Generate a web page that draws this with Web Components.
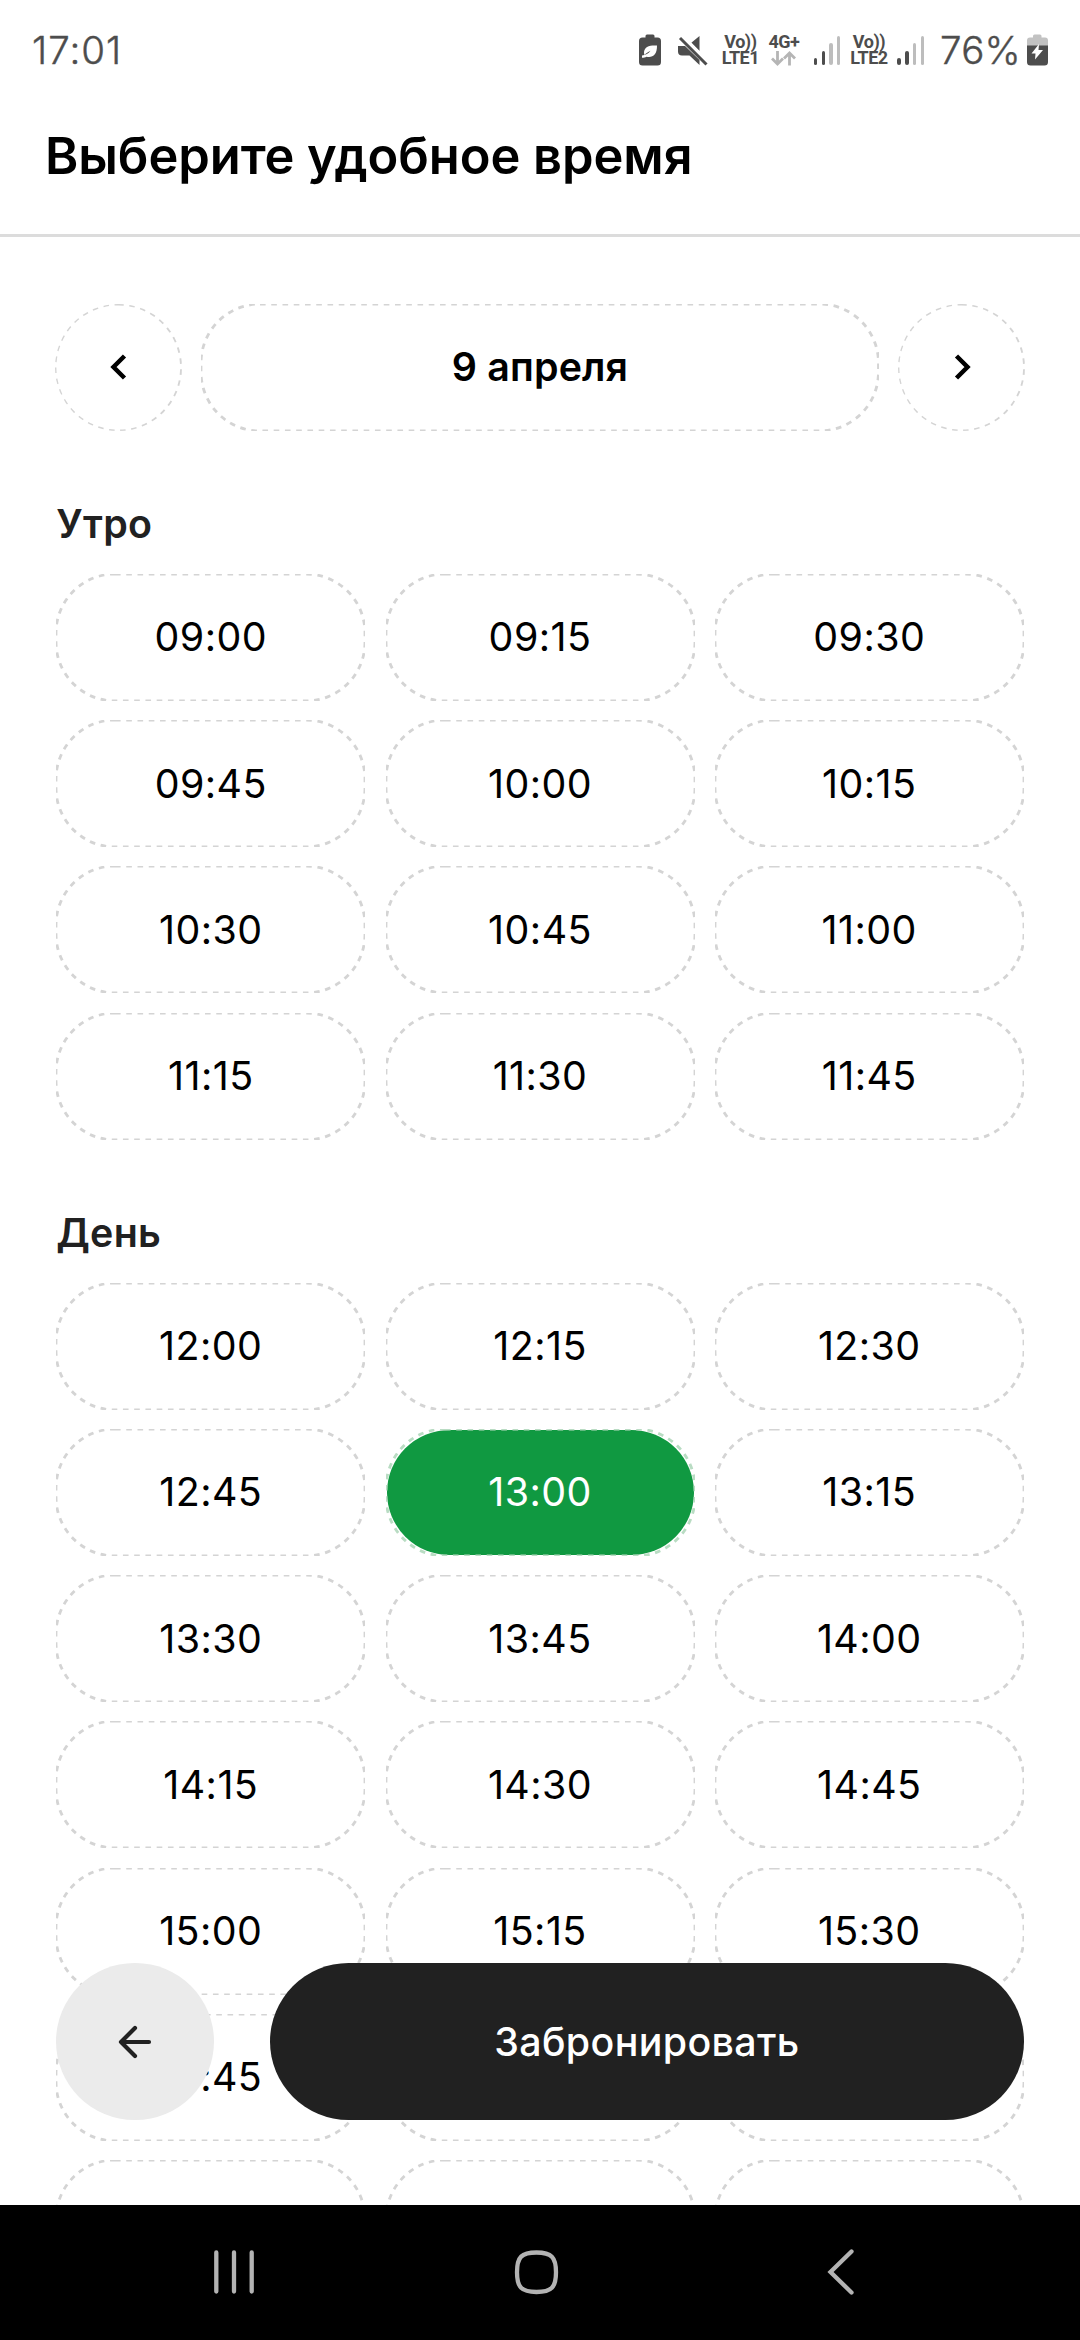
<!DOCTYPE html>
<html lang="ru">
<head>
<meta charset="utf-8">
<title>Выберите удобное время</title>
<style>
  html, body {
    margin: 0;
    height: 100%;
    overflow: hidden;
    background: #fff;
    font-family: Inter, sans-serif;
    color: #000;
  }
</style>
</head>
<body>
<booking-screen></booking-screen>

<script>
const timeGroups = [
  {
    title: 'Утро',
    times: ['09:00', '09:15', '09:30', '09:45', '10:00', '10:15', '10:30', '10:45', '11:00', '11:15', '11:30', '11:45']
  },
  {
    title: 'День',
    times: ['12:00', '12:15', '12:30', '12:45', '13:00', '13:15', '13:30', '13:45', '14:00', '14:15', '14:30', '14:45', '15:00', '15:15', '15:30', '15:45', '', '', '', '', '']
  }
];
const selectedTime = '13:00';

/**
 * @class StatusBar
 * @classdesc Phone status bar: clock on the left, indicators and battery on the right.
 * @augments HTMLElement
 */
class StatusBar extends HTMLElement {
  shadowRoot = this.attachShadow({ mode: 'open' });

  connectedCallback () {
    this.shadowRoot.innerHTML = `
      <style>
        :host {
          display: flex;
          align-items: center;
          justify-content: space-between;
          height: 100px;
          box-sizing: border-box;
          padding: 0 32px;
          color: #4d4d4d;
        }
        .clock, .percent {
          font-size: 38.500px;
          line-height: 46px;
          font-weight: 300;
          -webkit-text-stroke: 0.400px #4d4d4d;
          white-space: nowrap;
        }
        .clock { letter-spacing: 1px; }
        .percent { width: 84px; margin: 0 6px 0 13px; text-align: right; letter-spacing: 0.300px; }
        .indicators { display: flex; align-items: center; }
        .indicators > * { flex: none; }
        svg { display: block; }
        .volte, .network {
          display: flex;
          flex-direction: column;
          align-items: center;
          font: 700 18px/16.500px Roboto, sans-serif;
          letter-spacing: -0.500px;
          white-space: nowrap;
        }
        .volte { width: 38px; }
        .network { width: 33px; }
      </style>
      <span class="clock">${this.getAttribute('time')}</span>
      <div class="indicators">
        <svg width="22" height="32" viewBox="0 0 22 32">
          <path fill="#4d4d4d" d="M6.500 3.500V2Q6.500 .500 8 .500h6Q15.500 .500 15.500 2v1.500h3Q22 3.500 22 7v21q0 3.500-3.500 3.500h-15Q0 31.500 0 28V7Q0 3.500 3.500 3.500z"/>
          <path fill="#fff" d="M18 11.500c-7-.5-13 1-13 7.300 0 1 .2 1.700.5 2.300C7 19.500 9 18 11.500 16.800 9.500 19.500 6.500 21.500 3 21.500v2.300c1.800 0 3.300-.5 4.500-1.100 6 1.300 10.700-1.700 10.500-11.200z"/>
        </svg>
        <svg width="30" height="31" viewBox="0 0 30 31" style="margin-left:17px">
          <path fill="#4d4d4d" d="M21.500 1v15L13 8zM0 11h7l14.500 14v5L11.500 20.500H4q-4 0-4-4z"/>
          <path stroke="#fff" stroke-width="3" d="M5 1l25 26"/>
          <path stroke="#4d4d4d" stroke-width="3" d="M2 3l26.500 26.500"/>
        </svg>
        <div class="volte" style="margin-left:13px"><span>Vo))</span><span>LTE1</span></div>
        <div class="network" style="margin-left:8px">
          <span>4G+</span>
          <svg width="25" height="16.500" viewBox="0 0 25 16.500" fill="none" stroke="#b5b5b5" stroke-width="2.800">
            <path d="M6.500 1v13M1 8.500l5.500 5.500L12 8.500M18.500 15.500V3M13 8.500L18.500 3 24 8.500"/>
          </svg>
        </div>
        <signal-bars style="margin-left:13.500px"></signal-bars>
        <div class="volte" style="margin-left:9.500px"><span>Vo))</span><span>LTE2</span></div>
        <signal-bars style="margin-left:9.500px"></signal-bars>
        <span class="percent">${this.getAttribute('battery')}</span>
        <svg width="21" height="32" viewBox="0 0 21 32">
          <path fill="#c2c2c2" d="M6 3.500V2Q6 .500 7.500 .500h5.500Q14.500 .500 14.500 2v1.500H18q3 0 3 3V13H0V6.500q0-3 3-3z"/>
          <path fill="#4d4d4d" d="M0 11.500h21V28q0 3.500-3.500 3.500h-14Q0 31.500 0 28z"/>
          <path fill="#fff" d="M12 10L4.500 19.500h4L8 25.500l8-9.500h-4.500z"/>
        </svg>
      </div>
    `;
  }
}

/**
 * @class SignalBars
 * @classdesc Four signal bars, two of them lit.
 * @augments HTMLElement
 */
class SignalBars extends HTMLElement {
  shadowRoot = this.attachShadow({ mode: 'open' });

  connectedCallback () {
    this.shadowRoot.innerHTML = `
      <style>
        :host { display: flex; align-items: flex-end; gap: 4.200px; height: 29px; }
        i { width: 3.500px; border-radius: 2px; background: #bdbdbd; }
        .on { background: #4d4d4d; }
      </style>
      <i class="on" style="height:6.500px"></i>
      <i class="on" style="height:14px"></i>
      <i style="height:22px"></i>
      <i style="height:29px"></i>
    `;
  }
}

/**
 * @class PageHeader
 * @classdesc Screen title with a divider under it.
 * @augments HTMLElement
 */
class PageHeader extends HTMLElement {
  shadowRoot = this.attachShadow({ mode: 'open' });

  connectedCallback () {
    this.shadowRoot.innerHTML = `
      <style>
        :host {
          display: flex;
          align-items: center;
          height: 137px;
          box-sizing: border-box;
          padding: 0 45px 23px;
          border-bottom: 3px solid #dcdcdc;
        }
        h1 {
          margin: 0;
          font-size: 50.625px;
          line-height: 60px;
          font-weight: 600;
          letter-spacing: -0.070px;
        }
      </style>
      <h1><slot></slot></h1>
    `;
  }
}

/**
 * @class DashedBox
 * @classdesc Rounded box with a dashed outline; the outline is clipped on its straight sides.
 * @augments HTMLElement
 */
class DashedBox extends HTMLElement {
  shadowRoot = this.attachShadow({ mode: 'open' });

  connectedCallback () {
    const radius = this.getAttribute('radius') || '59';
    this.shadowRoot.innerHTML = `
      <style>
        :host {
          display: grid;
          grid-template: 100% / 100%;
          height: 127px;
        }
        svg, div { grid-area: 1 / 1; }
        svg {
          display: block;
          width: 100%;
          height: 100%;
          overflow: hidden;
        }
        rect {
          fill: none;
          stroke: var(--dash-color, #d4d4d4);
          stroke-width: 2.810px;
          stroke-dasharray: 5.625px;
        }
        div {
          display: flex;
          align-items: center;
          justify-content: center;
          padding-bottom: 1px;
        }
      </style>
      <svg><rect width="100%" height="100%" rx="${radius}"/></svg>
      <div><slot></slot></div>
    `;
  }
}

/**
 * @class DatePicker
 * @classdesc Current date between the previous and next buttons.
 * @augments HTMLElement
 */
class DatePicker extends HTMLElement {
  shadowRoot = this.attachShadow({ mode: 'open' });

  connectedCallback () {
    this.shadowRoot.innerHTML = `
      <style>
        :host { display: flex; gap: 19.500px; }
        .step {
          width: 126.500px;
          border-radius: 50%;
          overflow: hidden;
        }
        .date {
          flex: 1;
          font-size: 39.375px;
          font-weight: 600;
          letter-spacing: 0.150px;
        }
        svg { display: block; fill: none; stroke: #000; stroke-width: 4.500; }
      </style>
      <dashed-box class="step" radius="63.5" role="button" aria-label="Назад">
        <svg width="24" height="30" viewBox="0 0 24 30"><path d="M17.500 4L6.500 15l11 11"/></svg>
      </dashed-box>
      <dashed-box class="date"><slot></slot></dashed-box>
      <dashed-box class="step" radius="63.5" role="button" aria-label="Вперёд">
        <svg width="24" height="30" viewBox="0 0 24 30"><path d="M6.500 4l11 11-11 11"/></svg>
      </dashed-box>
    `;
  }
}

/**
 * @class TimeSlot
 * @classdesc A single bookable time; the "selected" attribute fills it green.
 * @augments HTMLElement
 */
class TimeSlot extends HTMLElement {
  shadowRoot = this.attachShadow({ mode: 'open' });

  connectedCallback () {
    this.shadowRoot.innerHTML = `
      <style>
        :host {
          display: block;
          box-sizing: border-box;
          height: 127px;
          padding: 1px;
          border-radius: 64px;
          font-size: 39.375px;
          letter-spacing: 0.450px;
        }
        :host([selected]) {
          --dash-color: #b9dcc3;
          background: #109941 content-box;
          color: #fff;
        }
        dashed-box { margin: -1px; }
      </style>
      <dashed-box><slot></slot></dashed-box>
    `;
  }
}

/**
 * @class TimeGroup
 * @classdesc Titled three-column grid of time slots.
 * @augments HTMLElement
 */
class TimeGroup extends HTMLElement {
  shadowRoot = this.attachShadow({ mode: 'open' });

  connectedCallback () {
    this.shadowRoot.innerHTML = `
      <style>
        :host { display: block; padding-top: 65.250px; }
        h2 {
          margin: 0 0 21.500px;
          font-size: 39.375px;
          line-height: 56.250px;
          font-weight: 600;
          letter-spacing: 0.300px;
          color: #212121;
        }
        .grid {
          display: grid;
          grid-template-columns: repeat(3, 309px);
          gap: 19.250px 20.250px;
        }
      </style>
      <h2>${this.getAttribute('heading')}</h2>
      <div class="grid"><slot></slot></div>
    `;
  }
}

/**
 * @class BookingActions
 * @classdesc Back and submit buttons floating over the time list.
 * @augments HTMLElement
 */
class BookingActions extends HTMLElement {
  shadowRoot = this.attachShadow({ mode: 'open' });

  connectedCallback () {
    this.shadowRoot.innerHTML = `
      <style>
        :host { display: flex; gap: 56.250px; }
        button {
          display: flex;
          align-items: center;
          justify-content: center;
          height: 157.500px;
          padding: 0;
          border: 0;
          border-radius: 78.750px;
          font: 500 39.375px Inter, sans-serif;
        }
        .back { width: 157.500px; background: #ebebeb; }
        .submit { flex: 1; background: #212121; color: #fff; letter-spacing: 0.350px; }
        svg {
          fill: none;
          stroke: #212121;
          stroke-width: 4.200;
          stroke-linecap: round;
          stroke-linejoin: round;
        }
      </style>
      <button class="back" aria-label="Назад">
        <svg width="34" height="34" viewBox="0 0 34 34"><path d="M31 17H3M17 3L3 17l14 14"/></svg>
      </button>
      <button class="submit"><slot></slot></button>
    `;
  }
}

/**
 * @class SystemNav
 * @classdesc System navigation: recents, home, back.
 * @augments HTMLElement
 */
class SystemNav extends HTMLElement {
  shadowRoot = this.attachShadow({ mode: 'open' });

  connectedCallback () {
    this.shadowRoot.innerHTML = `
      <style>
        :host {
          display: flex;
          align-items: center;
          justify-content: space-between;
          height: 135px;
          box-sizing: border-box;
          padding: 0 213px 2px 209px;
          background: #000;
        }
        svg { fill: none; stroke: #b3b3b3; stroke-width: 4.300; stroke-linecap: round; }
      </style>
      <svg width="50" height="50" viewBox="0 0 50 50"><path d="M7.300 5.500v39M25 5.500v39M42.700 5.500v39"/></svg>
      <svg width="50" height="50" viewBox="0 0 50 50">
        <path d="M23.500 5.500C38.500 5.500 43 10 43 25.200S38.500 45 23.500 45 4 40.500 4 25.200 8.500 5.500 23.500 5.500z"/>
      </svg>
      <svg width="50" height="50" viewBox="0 0 50 50"><path d="M34.500 4.500L13.500 25l21 20.500"/></svg>
    `;
  }
}

class BookingScreen extends HTMLElement {
  shadowRoot = this.attachShadow({ mode: 'open' });

  connectedCallback () {
    this.render();
  }

  render () {
    this.shadowRoot.innerHTML = `
      <style>
        :host {
          display: flex;
          flex-direction: column;
          width: 1080px;
          height: 2340px;
        }
        main {
          position: relative;
          flex: 1;
          min-height: 0;
          overflow: hidden;
          padding: 66.750px 56.250px 0;
        }
        /* the round buttons stick out by a pixel on each side */
        date-picker { margin: 0 -1px; }
        booking-actions {
          position: absolute;
          left: 56.250px;
          right: 56.250px;
          bottom: 84.700px;
        }
      </style>
      <status-bar time="17:01" battery="76%"></status-bar>
      <page-header>Выберите удобное время</page-header>
      <main>
        <date-picker>9 апреля</date-picker>
        ${timeGroups.map(this.renderGroup).join('')}
        <booking-actions>Забронировать</booking-actions>
      </main>
      <system-nav></system-nav>
    `;
  }

  renderGroup ({ title, times }) {
    const slots = times
      .map(time => `<time-slot${time === selectedTime ? ' selected' : ''}>${time}</time-slot>`)
      .join('');
    return `<time-group heading="${title}">${slots}</time-group>`;
  }
}

customElements.define('signal-bars', SignalBars);
customElements.define('status-bar', StatusBar);
customElements.define('page-header', PageHeader);
customElements.define('dashed-box', DashedBox);
customElements.define('date-picker', DatePicker);
customElements.define('time-slot', TimeSlot);
customElements.define('time-group', TimeGroup);
customElements.define('booking-actions', BookingActions);
customElements.define('system-nav', SystemNav);
customElements.define('booking-screen', BookingScreen);
</script>
</body>
</html>
